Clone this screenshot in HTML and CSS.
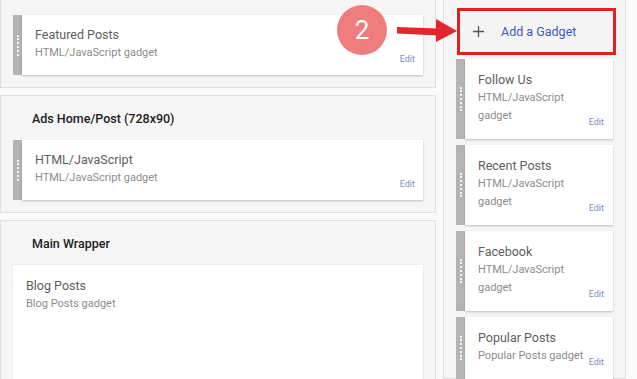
FILE: index.html
```html
<!DOCTYPE html>
<html lang="en">
<head>
  <meta charset="UTF-8">
  <title>Layout</title>
  <link rel="stylesheet" href="styles.css">
</head>
<body>
  <div class="page">
    <div class="main-col">
      <section class="area area-top">
        <div class="gadget">
          <div class="grip"></div>
          <div class="gadget-body">
            <div class="info">
              <div class="g-title">Featured Posts</div>
              <div class="g-sub">HTML/JavaScript gadget</div>
            </div>
            <span class="edit">Edit</span>
          </div>
        </div>
      </section>

      <section class="area">
        <div class="area-title">Ads Home/Post (728x90)</div>
        <div class="gadget">
          <div class="grip"></div>
          <div class="gadget-body">
            <div class="info">
              <div class="g-title">HTML/JavaScript</div>
              <div class="g-sub">HTML/JavaScript gadget</div>
            </div>
            <span class="edit">Edit</span>
          </div>
        </div>
      </section>

      <section class="area area-main">
        <div class="area-title">Main Wrapper</div>
        <div class="blog-card">
          <div class="g-title">Blog Posts</div>
          <div class="g-sub">Blog Posts gadget</div>
        </div>
      </section>
    </div>

    <div class="side-col">
      <div class="add-gadget">
        <svg class="plus" width="11" height="11" viewBox="0 0 11 11"><path d="M5.5 0v11M0 5.5h11" stroke="#555" stroke-width="1.3"/></svg>
        <span>Add a Gadget</span>
      </div>

      <div class="gadget side">
        <div class="grip"></div>
        <div class="gadget-body">
          <div class="info">
            <div class="g-title">Follow Us</div>
            <div class="g-sub">HTML/JavaScript gadget</div>
          </div>
          <span class="edit">Edit</span>
        </div>
      </div>
      <div class="gadget side">
        <div class="grip"></div>
        <div class="gadget-body">
          <div class="info">
            <div class="g-title">Recent Posts</div>
            <div class="g-sub">HTML/JavaScript gadget</div>
          </div>
          <span class="edit">Edit</span>
        </div>
      </div>
      <div class="gadget side">
        <div class="grip"></div>
        <div class="gadget-body">
          <div class="info">
            <div class="g-title">Facebook</div>
            <div class="g-sub">HTML/JavaScript gadget</div>
          </div>
          <span class="edit">Edit</span>
        </div>
      </div>
      <div class="gadget side">
        <div class="grip"></div>
        <div class="gadget-body">
          <div class="info">
            <div class="g-title">Popular Posts</div>
            <div class="g-sub">Popular Posts gadget</div>
          </div>
          <span class="edit">Edit</span>
        </div>
      </div>
    </div>

    <!-- annotation -->
    <div class="step">2</div>
    <svg class="arrow" width="70" height="30" viewBox="0 0 70 30">
      <polygon points="7,12 48,13.5 48,20.5 7,18.5" fill="#e2262a"/>
      <polygon points="46,4 67,16 46,27" fill="#e2262a"/>
    </svg>
  </div>
</body>
</html>
```

FILE: styles.css
```css
body {
  margin: 0;
  background: #fafafa;
  font-family: Roboto, "Liberation Sans", sans-serif;
}
.page {
  position: relative;
  display: flex;
  gap: 7px;
  height: 379px;
  overflow: hidden;
}

/* left column */
.main-col {
  width: 436px;
  display: flex;
  flex-direction: column;
  gap: 7px;
}
.area {
  background: #f5f5f5;
  border: 1px solid #e0e0e0;
  padding: 14px 12px 12px;
  flex-shrink: 0;
}
.area-top {
  border-top: none;
  padding-top: 15px;
}
.area-main {
  flex: 1 0 auto;
}
.area-title {
  font-size: 12.5px;
  font-weight: 500;
  line-height: 18px;
  color: #222;
  padding-left: 19px;
  margin-bottom: 12px;
}

/* gadget cards */
.gadget {
  display: flex;
  height: 60px;
  flex-shrink: 0;
}
.grip {
  width: 9px;
  background: #b4b4b4;
  display: flex;
  align-items: center;
  justify-content: center;
}
.grip::before {
  content: "";
  height: 21px;
  border-left: 2px dotted rgba(255, 255, 255, 0.85);
}
.gadget-body {
  flex: 1;
  display: flex;
  align-items: flex-end;
  background: #fff;
  padding: 11px 8px 13px 13px;
  box-shadow: 0 1px 2px rgba(0, 0, 0, 0.22);
}
.info {
  flex: 1;
  min-width: 0;
  align-self: flex-start;
}
.g-title {
  font-size: 12.5px;
  line-height: 18px;
  color: #5d5d5d;
}
.g-sub {
  font-size: 11px;
  line-height: 18px;
  color: #8c8c8c;
}
.edit {
  font-size: 9px;
  line-height: 10px;
  color: #7b8cc9;
  margin-left: 4px;
  margin-bottom: -2px;
}
.blog-card {
  background: #fff;
  height: 200px;
  padding: 12px 13px;
  box-shadow: 0 0 1px rgba(0, 0, 0, 0.2);
}

/* right column */
.side-col {
  width: 183px;
  box-sizing: border-box;
  background: #f5f5f5;
  border: 1px solid #e0e0e0;
  border-top: none;
  padding: 8px 12px 0 12px;
  display: flex;
  flex-direction: column;
  gap: 6px;
}
.add-gadget {
  height: 47px;
  flex-shrink: 0;
  box-sizing: border-box;
  border: 3px solid #e2211f;
  background: #f4f4f4;
  margin: 0 -3px -2px 1px;
  padding-left: 13px;
  display: flex;
  align-items: center;
  gap: 17px;
  font-size: 12.5px;
  color: #3d5cb8;
}
.gadget.side {
  height: auto;
}
.gadget.side .gadget-body {
  padding: 12px 9px 14px 13px;
}
.gadget.side .grip::before {
  height: 24px;
}

/* annotation overlay */
.step {
  position: absolute;
  left: 337px;
  top: 5px;
  width: 50px;
  height: 50px;
  border-radius: 50%;
  background: #f07d7e;
  color: #fff;
  font-size: 26px;
  line-height: 50px;
  text-align: center;
}
.arrow {
  position: absolute;
  left: 390px;
  top: 15px;
}
```
